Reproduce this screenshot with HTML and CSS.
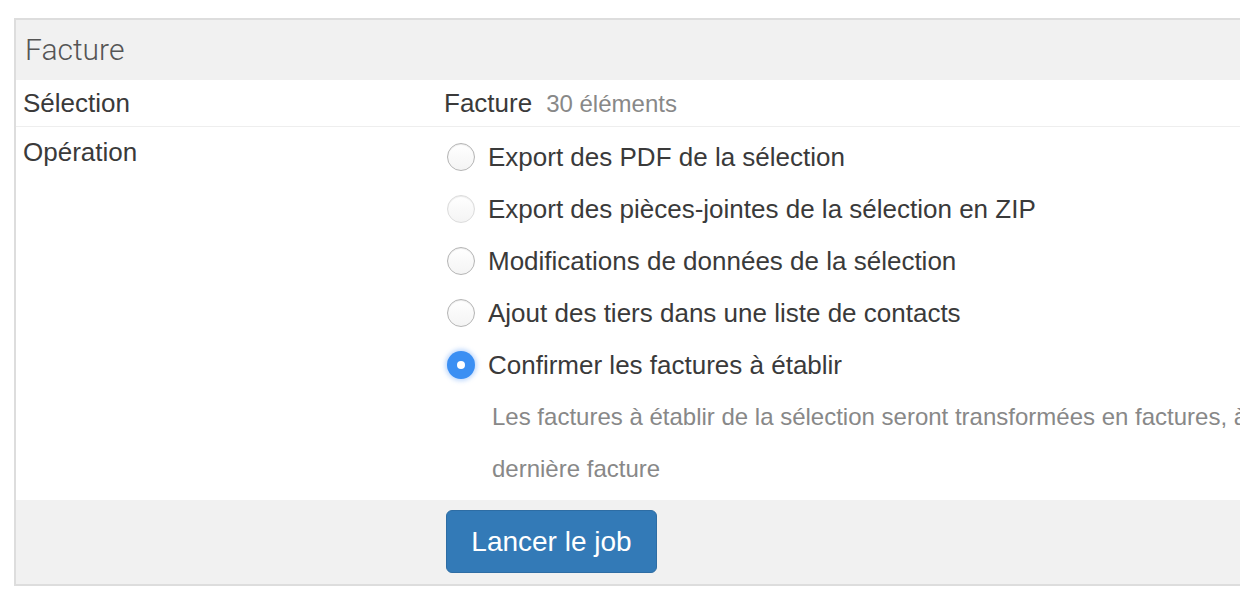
FILE: index.html
```html
<!DOCTYPE html>
<html lang="fr">
<head>
<meta charset="utf-8">
<title>Facture</title>
<link rel="stylesheet" href="styles.css">
</head>
<body>
<div class="panel">
  <div class="panel-head">Facture</div>
  <div class="row row-sel">
    <div class="label">Sélection</div>
    <div class="value"><span class="strong">Facture</span><span class="muted">30 éléments</span></div>
  </div>
  <div class="row row-op">
    <div class="label">Opération</div>
    <div class="value">
      <ul class="options">
        <li class="option"><span class="radio"></span><span>Export des PDF de la sélection</span></li>
        <li class="option"><span class="radio radio-faint"></span><span>Export des pièces-jointes de la sélection en ZIP</span></li>
        <li class="option"><span class="radio"></span><span>Modifications de données de la sélection</span></li>
        <li class="option"><span class="radio"></span><span>Ajout des tiers dans une liste de contacts</span></li>
        <li class="option"><span class="radio radio-checked"></span><span>Confirmer les factures à établir</span></li>
      </ul>
      <p class="help">Les factures à établir de la sélection seront transformées en factures, à la suite de la<br>dernière facture</p>
    </div>
  </div>
  <div class="footer">
    <div class="label"></div>
    <div class="value"><button class="btn" type="button">Lancer le job</button></div>
  </div>
</div>
</body>
</html>
```
FILE: styles.css
```css
html, body {
  margin: 0;
  padding: 0;
  background: #fff;
  overflow: hidden;
}
body {
  font-family: "Liberation Sans", Arial, sans-serif;
  color: #3a3a3a;
}
.panel {
  margin: 18px 0 0 14px;
  width: 1400px;
  border: 2px solid #dddddd;
  border-right: none;
  box-sizing: border-box;
}
.panel-head {
  height: 60px;
  line-height: 60px;
  background: #f1f1f1;
  padding-left: 9px;
  font-family: Roboto, "Liberation Sans", sans-serif;
  font-size: 30px;
  color: #555;
  font-weight: 300;
}
.row {
  display: grid;
  grid-template-columns: 428px 1fr;
}
.label {
  padding-left: 7px;
  font-size: 26px;
  line-height: 46px;
  color: #3a3a3a;
}
.row-sel {
  height: 46px;
  border-bottom: 1px solid #eeeeee;
}
.row-sel .value {
  line-height: 46px;
  font-size: 26px;
}
.strong {
  color: #3a3a3a;
}
.muted {
  color: #888;
  font-size: 24px;
  margin-left: 14px;
}
.row-op {
  height: 373px;
}
.row-op .label {
  padding-top: 2px;
}
.options {
  list-style: none;
  margin: 0;
  padding: 4px 0 0 0;
}
.option {
  display: flex;
  align-items: center;
  height: 52px;
  font-size: 26px;
  color: #3a3a3a;
}
.radio {
  width: 28px;
  height: 28px;
  box-sizing: border-box;
  border-radius: 50%;
  border: 1px solid #b5b5b5;
  background: linear-gradient(#fff, #f4f4f4);
  box-shadow: inset 0 1px 1px rgba(0,0,0,0.08);
  margin: 0 13px 0 3px;
  flex: none;
}
.radio-faint {
  border-color: #dcdcdc;
}
.radio-checked {
  border: none;
  background: #3b8ff3;
  box-shadow: 0 0 4px 2px rgba(80,150,245,0.35);
  position: relative;
}
.radio-checked::after {
  content: "";
  position: absolute;
  left: 10px;
  top: 10px;
  width: 8px;
  height: 8px;
  border-radius: 50%;
  background: #fff;
}
.help {
  margin: 0 0 0 48px;
  font-size: 24px;
  line-height: 52px;
  color: #888;
  white-space: nowrap;
}
.footer {
  display: grid;
  grid-template-columns: 428px 1fr;
  height: 84px;
  background: #f1f1f1;
}
.footer .value {
  padding: 10px 0 0 2px;
}
.btn {
  width: 211px;
  height: 63px;
  background: #337ab7;
  border: 1px solid #2e6da4;
  border-radius: 6px;
  color: #fff;
  font-family: "Liberation Sans", Arial, sans-serif;
  font-size: 28px;
  padding: 0;
  cursor: pointer;
}
```
